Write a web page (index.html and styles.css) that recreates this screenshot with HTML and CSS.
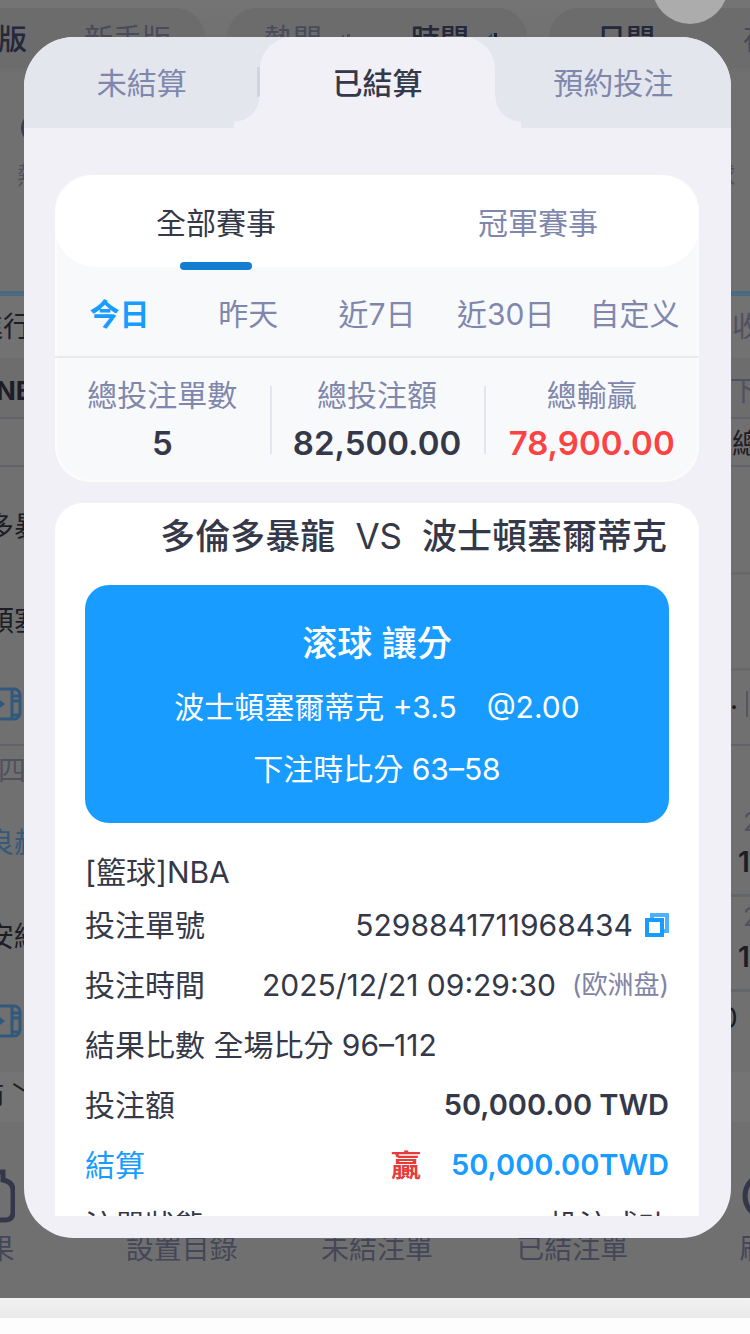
FILE: index.html
```html
<!DOCTYPE html>
<html lang="zh-Hant">
<head>
<meta charset="utf-8">
<meta name="viewport" content="width=device-width, initial-scale=1">
<title>已結算注單</title>
<link rel="stylesheet" href="styles.css">
</head>
<body>
<div class="screen">
  <div class="backdrop" aria-hidden="true">
    <div class="modes">
      <div class="pill pill-version"><b>專業版</b><span>新手版</span></div>
      <div class="pill pill-sort">
        <span>熱門</span>
        <svg class="sort" viewBox="0 0 14 16"><path d="M7 2v14H1V9zM10 2h3v14h-3z" fill="#4b4c5c"/></svg>
        <b>時間</b>
        <svg class="sort" viewBox="0 0 14 16"><path d="M8 1v15H0V9z" fill="#0f4f80"/><path d="M10 1h3v15h-3z" fill="#1f2133"/></svg>
      </div>
      <div class="pill pill-theme"><b>日間</b><span>夜間</span></div>
    </div>
    <div class="sports">
      <div class="sport"><i class="ball"></i><span>熱門</span></div>
      <div class="sport"><span>全球</span></div>
    </div>
    <div class="line-row line-row-first"><span class="shift-full">進行中</span><span class="tone-mute">收起</span></div>
    <div class="line-row line-row-league"><b class="shift-none">NBA</b><span class="tone-mute">下</span></div>
    <div class="line-row line-row-total"><span></span><span>總分</span></div>
    <div class="match match-first">
      <div class="match-side">
        <span>多暴龍</span>
        <span>頓塞爾</span>
        <svg class="video" viewBox="0 0 36 34"><rect x="2" y="2" width="32" height="30" rx="6"/><path d="M26 2v30M26 9h7M26 14h7M26 28h7"/><path class="solid" d="M9 9l10 8-10 8z"/></svg>
      </div>
      <div class="odds odds-first"><i></i><i></i><span class="odds-dot">.<span class="odds-bar"></span></span></div>
    </div>
    <div class="match match-second">
      <div class="match-side">
        <span class="tone-mute quarter">四</span>
        <span class="tone-blue">良赫爾</span>
        <span>安納爾</span>
        <svg class="video" viewBox="0 0 36 34"><rect x="2" y="2" width="32" height="30" rx="6"/><path d="M26 2v30M26 9h7M26 14h7M26 28h7"/><path class="solid" d="M9 9l10 8-10 8z"/></svg>
      </div>
      <div class="odds odds-second">
        <div class="odd"><span class="tone-mute">2</span><b>1.9</b></div>
        <div class="odd"><span class="tone-mute">2</span><b>1.9</b></div>
        <span class="odd-last">0</span>
      </div>
    </div>
    <div class="line-row line-row-more"><span class="shift-more">節 ﹀</span></div>
    <div class="nav">
      <div class="nav-item"><svg viewBox="0 0 56 56"><path d="M6 12h30V4h8v8q10 2 10 10v22q0 8-8 8H12"/></svg><span>賽果</span></div>
      <div class="nav-item"><svg viewBox="0 0 56 56"></svg><span>設置目錄</span></div>
      <div class="nav-item"><svg viewBox="0 0 56 56"></svg><span>未結注單</span></div>
      <div class="nav-item"><svg viewBox="0 0 56 56"></svg><span>已結注單</span></div>
      <div class="nav-item"><svg viewBox="0 0 56 56"><circle cx="28" cy="28" r="22"/></svg><span>刷新</span></div>
    </div>
  </div>
  <div class="close-bubble"></div>

  <main class="modal" role="dialog" aria-label="注單">
    <div class="tabs" role="tablist">
      <button class="tab tab-divided" role="tab" aria-selected="false">未結算</button>
      <button class="tab tab-active" role="tab" aria-selected="true">已結算</button>
      <button class="tab" role="tab" aria-selected="false">預約投注</button>
    </div>
    <div class="content">
      <section class="panel">
        <div class="segments">
          <button class="segment segment-active">全部賽事</button>
          <button class="segment">冠軍賽事</button>
        </div>
        <div class="periods">
          <button class="period period-active">今日</button>
          <button class="period">昨天</button>
          <button class="period">近7日</button>
          <button class="period">近30日</button>
          <button class="period">自定义</button>
        </div>
        <dl class="stats">
          <div class="stat"><dt>總投注單數</dt><dd>5</dd></div>
          <div class="stat"><dt>總投注額</dt><dd>82,500.00</dd></div>
          <div class="stat"><dt>總輸贏</dt><dd class="red">78,900.00</dd></div>
        </dl>
      </section>

      <article class="card">
        <h2 class="teams"><span>多倫多暴龍</span><span class="versus">VS</span><span>波士頓塞爾蒂克</span></h2>
        <div class="bet">
          <strong>滚球 讓分</strong>
          <p class="pick"><span>波士頓塞爾蒂克 +3.5</span><span>@2.00</span></p>
          <p>下注時比分 63–58</p>
        </div>
        <div class="league">[籃球]NBA</div>
        <div class="row">
          <span>投注單號</span>
          <span class="value value-id">5298841711968434
            <button class="copy" aria-label="複製"><svg viewBox="0 0 24 24"><path class="copy-back" d="M7 5V2h15v16h-4"/><rect x="2" y="7" width="15" height="15"/></svg></button>
          </span>
        </div>
        <div class="row">
          <span>投注時間</span>
          <span class="value">2025/12/21 09:29:30<small>(欧洲盘)</small></span>
        </div>
        <div class="row"><span>結果比數 全場比分 96–112</span></div>
        <div class="row"><span>投注額</span><b class="value amount">50,000.00 TWD</b></div>
        <div class="row blue"><span>結算</span><span class="value settle"><b class="won">贏</b><b class="amount">50,000.00TWD</b></span></div>
        <div class="row"><span>注單狀態</span><span class="value">投注成功</span></div>
      </article>
    </div>
  </main>
</div>
<footer class="home-bar"></footer>
</body>
</html>
```
FILE: styles.css
```css
* { box-sizing: border-box; }

body {
  margin: 0;
  min-height: 100vh;
  display: flex;
  flex-direction: column;
  background: #fdfdfd;
  color: #343848;
  font-family: Inter, "Noto Sans CJK TC", "Noto Sans CJK SC", sans-serif;
  font-size: 30px;
  line-height: 40px;
  overflow-x: hidden;
}

button {
  margin: 0;
  padding: 0;
  border: 0;
  background: none;
  color: inherit;
  font: inherit;
  cursor: pointer;
}

p, h2, dl, dd { margin: 0; }

.screen {
  position: relative;
  flex: 1;
  overflow: hidden;
  background: #707070;
}

.home-bar {
  height: 36px;
  border-bottom: 16px solid #fdfdfd;
  background: linear-gradient(#f3f3f3, #e9e9e9);
}

/* Dimmed page behind the dialog */
.backdrop {
  color: #1c1d26;
  font-size: 28px;
  white-space: nowrap;
}

.modes {
  display: flex;
  gap: 22px;
  height: 72px;
  padding-top: 8px;
  margin-right: -100px;
  color: #494a5a;
  background: linear-gradient(#747474, #6e6e6e);
}
.modes b { color: #25283a; font-weight: 500; }
.pill {
  display: flex;
  align-items: center;
  height: 60px;
  padding-top: 4px;
  border-radius: 30px;
  background: #6c6c6d;
  font-size: 29px;
}
.pill-version { gap: 57px; width: 265px; margin-left: -60px; }
.pill-sort { width: 300px; padding-left: 37px; }
.pill-sort b { margin-left: 60px; }
.pill-theme { flex: 1; padding-left: 48px; gap: 88px; }
.sort { width: 14px; height: 16px; margin-left: 15px; }

.sports {
  display: flex;
  justify-content: space-between;
  align-items: flex-end;
  height: 224px;
  padding: 0 15px 95px 17px;
  border-bottom: 5px solid #4b6b82;
  color: #50515f;
  font-size: 24px;
}
.sport { display: flex; flex-direction: column; gap: 12px; }
.ball {
  width: 32px;
  height: 32px;
  margin-left: 4px;
  border: 3px solid #3c3f50;
  border-radius: 50%;
}

.line-row {
  display: flex;
  justify-content: space-between;
  align-items: center;
}
.line-row > :last-child { margin-right: -38px; }
.line-row-first { height: 62px; background: #727272; }
.line-row-league { height: 61px; padding-top: 6px; background: #6d6d6d; border-bottom: 2px solid #62636a; }
.line-row-league > :last-child { margin-right: -8px; }
.line-row-total { height: 48px; padding-top: 4px; border-bottom: 2px solid #62636a; }
.line-row-more { height: 50px; background: #747474; }
.shift-full { margin-left: -25px; }
.shift-none { margin-left: -4px; font-size: 26px; }
.shift-more { margin-left: -24px; }
.tone-mute { color: #50515f; }
.tone-blue { color: #34597a; }

.match {
  display: flex;
  justify-content: space-between;
}
.match-side { display: flex; flex-direction: column; gap: 54px; margin-left: -14px; }
.match-first { height: 279px; padding-top: 40px; border-bottom: 2px solid #62636a; }
.match-first .video { margin-top: -8px; }
.match-second { height: 326px; padding-top: 5px; }
.match-second .quarter { margin: 0 0 -22px 12px; }
.match-second .video { margin-top: -7px; }
.video {
  width: 36px;
  height: 34px;
  fill: none;
  stroke: #31597d;
  stroke-width: 3;
}
.video .solid { fill: #31597d; stroke: none; }

.odds { width: 40px; }
.odds-first { display: flex; flex-direction: column; margin-top: -28px; }
.odds-first i { height: 96px; border-bottom: 3px solid #696969; }
.odds-dot { display: flex; margin: 8px 0 0 20px; }
.odds-bar { width: 2px; height: 26px; margin: 12px 0 0 8px; background: #55565f; }
.odds-second { padding-top: 51px; }
.odd { display: flex; flex-direction: column; height: 95px; border-bottom: 3px solid #636668; }
.odd .tone-mute { margin-left: 33px; font-size: 26px; }
.odd b { margin-left: 28px; font-weight: 600; }
.odd-last { display: block; margin: 6px 0 0 10px; }

.nav {
  display: grid;
  grid-template-columns: repeat(5, 1fr);
  margin: 46px -115px 0 -111px;
  color: #454758;
}
.nav-item { display: flex; flex-direction: column; align-items: center; gap: 5px; }
.nav-item svg { width: 56px; height: 56px; fill: none; stroke: #343749; stroke-width: 5; }

.close-bubble {
  position: absolute;
  top: -52px;
  right: 22px;
  width: 76px;
  height: 76px;
  border-radius: 50%;
  background: #acacac;
}

/* Dialog */
.modal {
  position: absolute;
  inset: 37px 19px 60px 24px;
  display: flex;
  flex-direction: column;
  padding-bottom: 22px;
  overflow: hidden;
  border-radius: 50px;
  background: #f1f0f6;
}

.tabs {
  display: grid;
  grid-template-columns: repeat(3, 1fr);
  height: 91px;
  flex: none;
  background: #e3e6ed;
  color: #8087ad;
}
.tab { position: relative; }
.tab-divided::after {
  content: "";
  position: absolute;
  top: 30px;
  right: 0;
  width: 3px;
  height: 30px;
  background: #cfd3e2;
}
.tab-active {
  border-radius: 32px 32px 0 0;
  background: #f1f0f6;
  color: #343848;
  font-weight: 500;
}
.tab-active::before,
.tab-active::after {
  content: "";
  position: absolute;
  bottom: 0;
  width: 26px;
  height: 32px;
}
.tab-active::before {
  left: -26px;
  background: radial-gradient(circle at 0 0, transparent 25px, #f1f0f6 26px);
}
.tab-active::after {
  right: -26px;
  background: radial-gradient(circle at 100% 0, transparent 25px, #f1f0f6 26px);
}

.content {
  flex: 1;
  min-height: 0;
  overflow: hidden;
  margin: 0 32px 0 31px;
  padding-top: 47px;
}

.panel {
  margin-bottom: 21px;
  border-radius: 36px;
  background: #f8f9fb;
  box-shadow: inset 0 0 0 2px #fcfcfe;
  color: #8087ad;
}
.segments {
  display: grid;
  grid-template-columns: repeat(2, 1fr);
  height: 92px;
  border-radius: 40px;
  background: #fff;
}
.segment { position: relative; padding-top: 4px; }
.segment-active { color: #343848; }
.segment-active::after {
  content: "";
  position: absolute;
  bottom: -3px;
  left: calc(50% - 36px);
  width: 72px;
  height: 8px;
  border-radius: 4px;
  background: #137dcf;
}
.periods {
  display: grid;
  grid-template-columns: repeat(5, 1fr);
  height: 91px;
  border-bottom: 2px solid #e9eaee;
}
.period { padding-top: 4px; }
.period-active { color: #189cff; font-weight: 700; }
.stats {
  display: grid;
  grid-template-columns: repeat(3, 1fr);
  height: 124px;
  padding: 17px 0;
}
.stat { position: relative; text-align: center; }
.stat + .stat::before {
  content: "";
  position: absolute;
  top: 11px;
  left: 0;
  width: 2px;
  height: 68px;
  background: #e4e5ee;
}
.stat dd {
  margin-top: 8px;
  color: #343848;
  font-size: 33px;
  font-weight: 600;
}
.stat .red { color: #fc4343; }

.card {
  padding: 9px 30px 30px;
  border-radius: 28px 28px 0 0;
  background: #fff;
}
.teams {
  display: flex;
  justify-content: flex-end;
  gap: 20px;
  padding-right: 2px;
  font-size: 35px;
  line-height: 48px;
  font-weight: 500;
  white-space: nowrap;
}
.versus { font-weight: 400; }
.bet {
  display: flex;
  flex-direction: column;
  align-items: center;
  gap: 22px;
  margin-top: 25px;
  padding: 36px 16px 34px;
  border-radius: 24px;
  background: #189cff;
  color: #fff;
}
.bet strong { font-size: 35px; line-height: 44px; font-weight: 500; }
.pick { display: flex; gap: 30px; }
.league { padding-top: 29px; height: 72px; }
.row {
  display: flex;
  justify-content: space-between;
  align-items: center;
  height: 60px;
  white-space: nowrap;
}
.value { display: flex; align-items: center; }
.value-id { gap: 12px; }
.value small { margin-left: 16px; font-size: 26px; color: #7f83a6; }
.amount { font-size: 29px; font-weight: 600; }
.settle { gap: 30px; }
.won { color: #e53b3b; }
.blue { color: #189cff; }
.copy { display: flex; }
.copy svg {
  width: 24px;
  height: 24px;
  fill: none;
  stroke: #189cff;
  stroke-width: 4;
}
.copy .copy-back { stroke: #4db1ff; }
```
